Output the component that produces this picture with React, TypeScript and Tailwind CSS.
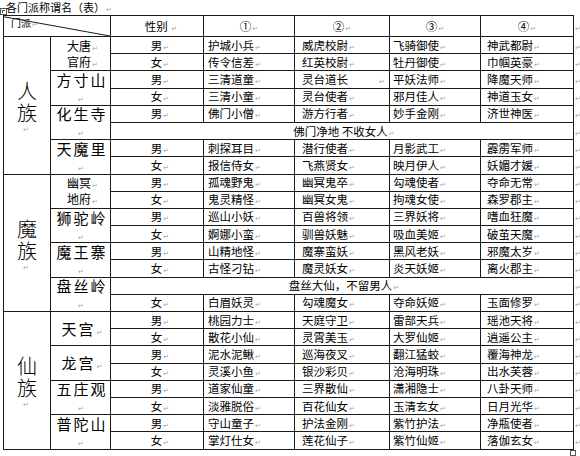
import React from 'react'

type Row = { gender?: string; cells?: string[]; merged?: string }
type Sect = { name: string[]; big: boolean; rows: Row[] }
type Race = { name: [string, string]; sects: Sect[] }

const races: Race[] = [
    {
        name: ['人', '族'],
        sects: [
            {
                name: ['大唐', '官府'],
                big: false,
                rows: [
                    { gender: '男', cells: ['护城小兵', '威虎校尉', '飞骑御使', '神武都尉'] },
                    { gender: '女', cells: ['传令信差', '红英校尉', '牡丹御使', '巾帼英豪'] },
                ],
            },
            {
                name: ['方寸山'],
                big: true,
                rows: [
                    { gender: '男', cells: ['三清道童', '灵台道长   ', '平妖法师', '降魔天师'] },
                    { gender: '女', cells: ['三清小童', '灵台使者', '邪月佳人', '神道玉女'] },
                ],
            },
            {
                name: ['化生寺'],
                big: true,
                rows: [
                    { gender: '男', cells: ['佛门小僧', '游方行者', '妙手金刚', '济世神医'] },
                    { merged: '佛门净地 不收女人' },
                ],
            },
            {
                name: ['天魔里'],
                big: true,
                rows: [
                    { gender: '男', cells: ['刺探耳目', '潜行使者', '月影武工', '霹雳军师'] },
                    { gender: '女', cells: ['报信侍女', '飞燕贤女', '映月伊人', '妖媚才媛'] },
                ],
            },
        ],
    },
    {
        name: ['魔', '族'],
        sects: [
            {
                name: ['幽冥', '地府'],
                big: false,
                rows: [
                    { gender: '男', cells: ['孤魂野鬼', '幽冥鬼卒', '勾魂使者', '夺命无常'] },
                    { gender: '女', cells: ['鬼灵精怪', '幽冥女鬼', '拘魂女使', '森罗郡主'] },
                ],
            },
            {
                name: ['狮驼岭'],
                big: true,
                rows: [
                    { gender: '男', cells: ['巡山小妖', '百兽将领', '三界妖将', '嗜血狂魔'] },
                    { gender: '女', cells: ['婀娜小蛮', '驯兽妖魅', '吸血美姬', '破茧天魔'] },
                ],
            },
            {
                name: ['魔王寨'],
                big: true,
                rows: [
                    { gender: '男', cells: ['山精地怪', '魔寨蛮妖', '黑风老妖', '邪魔太岁'] },
                    { gender: '女', cells: ['古怪刁钻', '魔灵妖女', '炎天妖姬', '离火郡主'] },
                ],
            },
            {
                name: ['盘丝岭'],
                big: true,
                rows: [
                    { merged: '盘丝大仙，不留男人' },
                    { gender: '女', cells: ['白眉妖灵', '勾魂魔女', '夺命妖姬', '玉面修罗'] },
                ],
            },
        ],
    },
    {
        name: ['仙', '族'],
        sects: [
            {
                name: ['天宫'],
                big: true,
                rows: [
                    { gender: '男', cells: ['桃园力士', '天庭守卫', '雷部天兵', '瑶池天将'] },
                    { gender: '女', cells: ['散花小仙', '灵霄美玉', '大罗仙姬', '逍遥公主'] },
                ],
            },
            {
                name: ['龙宫'],
                big: true,
                rows: [
                    { gender: '男', cells: ['泥水泥鳅', '巡海夜叉', '翻江猛蛟', '覆海神龙'] },
                    { gender: '女', cells: ['灵溪小鱼', '银沙彩贝', '沧海明珠', '出水芙蓉'] },
                ],
            },
            {
                name: ['五庄观'],
                big: true,
                rows: [
                    { gender: '男', cells: ['道家仙童', '三界散仙', '潇湘隐士', '八卦天师'] },
                    { gender: '女', cells: ['淡雅脱俗', '百花仙女', '玉清玄女', '日月光华'] },
                ],
            },
            {
                name: ['普陀山'],
                big: true,
                rows: [
                    { gender: '男', cells: ['守山童子', '护法金刚', '紫竹护法', '净瓶使者'] },
                    { gender: '女', cells: ['掌灯仕女', '莲花仙子', '紫竹仙姬', '落伽玄女'] },
                ],
            },
        ],
    },
]

// left padding of the four title columns
const colPad = ['pl-[4px]', 'pl-[7px]', 'pl-[3px]', 'pl-[6px]']

const cell = 'border border-[#1a1a1a] p-0 align-middle'
const small = 'text-[11.5px] leading-[12px]'

function Mark({ className = '' }: { className?: string }) {
    return (
        <span className={`font-['DejaVu_Sans',sans-serif] text-[7px] leading-none text-[#a3a3a3] ml-[1px] ${className}`}>↵</span>
    )
}

function Title({ text }: { text: string }) {
    const trimmed = text.trimEnd()
    const padded = trimmed !== text
    return (
        <span className="whitespace-pre">
            {trimmed}
            {padded && <span className="inline-block w-[30px]" />}
            <Mark />
        </span>
    )
}

function EndMark() {
    return (
        <td className={`p-0 align-middle ${small}`}>
            <Mark className="ml-0" />
        </td>
    )
}

export default function App() {
    const body: React.ReactNode[] = []

    races.forEach((race, ri) => {
        const raceRows = race.sects.reduce((n, s) => n + s.rows.length, 0)
        race.sects.forEach((sect, si) => {
            sect.rows.forEach((row, rowi) => {
                body.push(
                    <tr key={`${ri}-${si}-${rowi}`} className="h-[17.2px]">
                        {si === 0 && rowi === 0 && (
                            <td rowSpan={raceRows} className={`${cell} text-center leading-[12px]`}>
                                <div className="flex flex-col items-center pt-[4px] text-[20px] leading-[22px] font-light">
                                    <div>{race.name[0]}</div>
                                    <div>{race.name[1]}</div>
                                    <div className="mt-[1px] text-[7px] leading-[8px] -ml-[4px]">
                                        <Mark className="ml-0" />
                                    </div>
                                </div>
                            </td>
                        )}
                        {rowi === 0 && (
                            <td rowSpan={sect.rows.length} className={`${cell} text-center text-[15px] leading-[16px]`}>
                                {sect.big ? (
                                    <span className="tracking-[2px] pl-[3px]">
                                        {sect.name[0]}
                                        <Mark className="tracking-normal" />
                                    </span>
                                ) : (
                                    <div className="text-[12px] leading-[16px]">
                                        {sect.name.map(n => (
                                            <div key={n} className="pl-[4px]">
                                                {n}
                                                <Mark />
                                            </div>
                                        ))}
                                    </div>
                                )}
                            </td>
                        )}
                        {row.merged ? (
                            <td colSpan={5} className={`${cell} text-center ${small}`}>
                                <span className="whitespace-pre pl-[4px]">{row.merged}</span>
                                <Mark />
                            </td>
                        ) : (
                            <>
                                <td className={`${cell} text-center ${small} pl-[6px]`}>
                                    {row.gender}
                                    <Mark />
                                </td>
                                {row.cells!.map((c, ci) => (
                                    <td key={ci} className={`${cell} ${colPad[ci]} ${small}`}>
                                        <Title text={c} />
                                    </td>
                                ))}
                            </>
                        )}
                        <EndMark />
                    </tr>
                )
            })
        })
    })

    return (
        <div className="relative w-[580px] h-[456px] overflow-hidden bg-white text-black font-['Noto_Sans_CJK_SC','Noto_Sans',sans-serif]">
            {/* caption line */}
            <div className="h-[15px] pl-[6px] text-[11px] leading-[15px]">
                各门派称谓名（表）
                <Mark />
            </div>

            <table className="ml-[3px] w-[577px] table-fixed border-collapse">
                <colgroup>
                    <col className="w-[47px]" />
                    <col className="w-[60px]" />
                    <col className="w-[93px]" />
                    <col className="w-[91px]" />
                    <col className="w-[95px]" />
                    <col className="w-[91px]" />
                    <col className="w-[93px]" />
                    <col className="w-[7px]" />
                </colgroup>
                <tbody>
                    <tr className="h-[21px]">
                        <td colSpan={2} className={`${cell} relative align-top leading-[12px]`}>
                            <svg className="absolute inset-0 w-full h-full" preserveAspectRatio="none" viewBox="0 0 100 100">
                                <line x1="0" y1="4" x2="100" y2="100" stroke="#1a1a1a" strokeWidth="1" vectorEffect="non-scaling-stroke" />
                            </svg>
                            <div className="pl-[7px] pt-[1px] text-[10px] leading-[12px]">
                                门派
                                <Mark />
                            </div>
                        </td>
                        <td className={`${cell} text-center ${small} pl-[8px]`}>
                            性别 <Mark />
                        </td>
                        {['①', '②', '③', '④'].map(h => (
                            <td key={h} className={`${cell} text-center ${small}`}>
                                {h}
                                <Mark />
                            </td>
                        ))}
                        <EndMark />
                    </tr>
                    {body}
                </tbody>
            </table>

            {/* word table handles */}
            <div className="absolute left-0 top-[8px] w-[7px] h-[7px] border border-[#555] bg-white flex items-center justify-center">
                <div className="w-[3px] h-[3px] border-t border-l border-[#555]" />
            </div>
            <div className="absolute left-[570px] top-[450px] w-[6px] h-[6px] border border-[#555] bg-white" />
        </div>
    )
}
